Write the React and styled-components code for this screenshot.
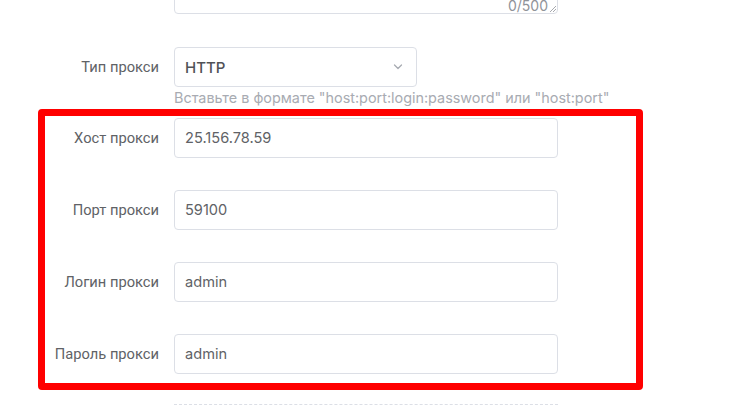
import React from 'react'
import styled, {createGlobalStyle} from 'styled-components'

const GlobalStyle = createGlobalStyle`
  html, body {
    margin: 0;
    padding: 0;
    background: #fff;
    overflow: hidden;
  }
  body {
    font-family: Inter, Roboto, "Noto Sans", sans-serif;
    color: #606266;
  }
`

const Page = styled.div`
  width: 735px;
  height: 416px;
  overflow: hidden;
`
const Form = styled.form`
  margin-top: -86px;
  display: flex;
  flex-direction: column;
`
const Row = styled.div`
  display: flex;
  align-items: center;
  margin-bottom: ${props => props.gap || 0}px;
`
const Label = styled.label`
  flex: 0 0 174px;
  box-sizing: border-box;
  padding-right: 15px;
  text-align: right;
  font-size: 14.7px;
  color: #606266;
  font-family: Roboto, Inter, sans-serif;
`
const Field = styled.div`
  position: relative;
  box-sizing: border-box;
  width: ${props => props.width || 384}px;
  height: ${props => props.height || 40}px;
  border: 1px solid #dcdfe6;
  border-radius: 4px;
  display: flex;
  align-items: center;
  padding: 0 10px;
  font-size: 14.6px;
  color: #606266;
  background: #fff;
`
const SelectValue = styled.span`
  flex: 1;
  font-weight: 500;
  font-size: 15px;
  color: #505257;
`
const Counter = styled.span`
  position: absolute;
  right: 9px;
  bottom: 0;
  font-size: 14px;
  line-height: 14px;
  color: #909399;
`
const Resize = styled.svg`
  position: absolute;
  right: 1px;
  bottom: 1px;
`
const Hint = styled.div`
  margin-left: 174px;
  font-size: 14.4px;
  line-height: 22px;
  color: #a8abb2;
  white-space: nowrap;
`
const Highlight = styled.section`
  position: relative;
  padding: 9px 0 16px;
  display: flex;
  flex-direction: column;
  gap: 32px;
  &::after {
    content: '';
    position: absolute;
    top: 0;
    bottom: 0;
    left: 38px;
    width: 605px;
    box-sizing: border-box;
    border: 7px solid #ff0000;
    border-radius: 4px;
    pointer-events: none;
  }
`
const Divider = styled.div`
  margin: 14px 0 0 174px;
  width: 384px;
  border-top: 1px dashed #dcdfe6;
`

const proxyFields = [
  ['Хост прокси', '25.156.78.59'],
  ['Порт прокси', '59100'],
  ['Логин прокси', 'admin'],
  ['Пароль прокси', 'admin']
]

export default function App() {
  return (
    <Page>
      <GlobalStyle />
      <Form>
        <Row gap={33}>
          <Label />
          <Field height={100}>
            <Counter>0/500</Counter>
            <Resize width="7" height="7" viewBox="0 0 7 7">
              <path d="M1 7L7 1M4 7L7 4" stroke="#909399" strokeWidth="0.8" />
            </Resize>
          </Field>
        </Row>
        <Row>
          <Label>Тип прокси</Label>
          <Field width={243}>
            <SelectValue>HTTP</SelectValue>
            <svg width="10" height="6" viewBox="0 0 10 6" style={{marginRight: 3}}>
              <path d="M1.5 1l3.5 3.5L8.5 1" fill="none" stroke="#a8abb2" strokeWidth="1.3" strokeLinecap="round" strokeLinejoin="round" />
            </svg>
          </Field>
        </Row>
        <Hint>Вставьте в формате "host:port:login:password" или "host:port"</Hint>
        <Highlight>
          {proxyFields.map(([label, value]) => (
            <Row key={label}>
              <Label>{label}</Label>
              <Field>{value}</Field>
            </Row>
          ))}
        </Highlight>
        <Divider />
      </Form>
    </Page>
  )
}
